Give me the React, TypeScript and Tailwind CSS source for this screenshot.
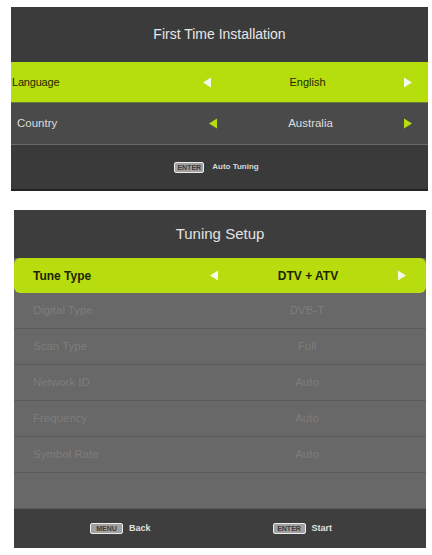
import React from 'react';

const font = { fontFamily: '"Liberation Sans", Arial, sans-serif' };

const Arrow: React.FC<{ dir: 'left' | 'right'; color: string }> = ({ dir, color }) => (
  <svg width="10" height="11" viewBox="0 0 10 11">
    {dir === 'left' ? <polygon points="9,0.5 9,10.5 1,5.5" fill={color} /> : <polygon points="1,0.5 1,10.5 9,5.5" fill={color} />}
  </svg>
);

const Key: React.FC<{ label: string; w: string }> = ({ label, w }) => (
  <span
    className={`inline-flex h-[11px] items-center justify-center rounded-[2px] border border-[#ececec] bg-[#a0a0a0] text-[7px] font-bold leading-none text-[#3a3a3a] ${w}`}
  >
    {label}
  </span>
);

const rows = [
  { label: 'Digital Type', value: 'DVB-T' },
  { label: 'Scan Type', value: 'Full' },
  { label: 'Network ID', value: 'Auto' },
  { label: 'Frequency', value: 'Auto' },
  { label: 'Symbol Rate', value: 'Auto' },
];

const App: React.FC = () => {
  return (
    <div className="flex h-[555px] w-[432px] flex-col overflow-hidden bg-white" style={font}>
      {/* First Time Installation */}
      <div className="ml-[11px] mt-[7px] flex w-[417px] flex-col bg-[#3b3b3b]">
        <div className="flex h-[55px] items-center justify-center text-[14px] text-[#e6e6e6]">
          First Time Installation
        </div>
        <div className="flex h-[41px] items-center border-b border-[#6a7a3a] bg-[#b6dd0c] text-[11px] text-[#1e2a00]">
          <span className="w-[191px] pl-[1px] tracking-[-0.2px]">Language</span>
          <Arrow dir="left" color="#f4f8e8" />
          <span className="flex-1 text-center">English</span>
          <span className="mr-[15px]">
            <Arrow dir="right" color="#f4f8e8" />
          </span>
        </div>
        <div className="flex h-[42px] items-center border-b border-[#6a6a6a] bg-[#4a4a4a] text-[11.5px] text-[#dcdcdc]">
          <span className="w-[197px] pl-[6px]">Country</span>
          <Arrow dir="left" color="#b6dd0c" />
          <span className="flex-1 text-center">Australia</span>
          <span className="mr-[15px]">
            <Arrow dir="right" color="#b6dd0c" />
          </span>
        </div>
        <div className="flex h-[46px] items-center justify-center gap-[8px] border-b-2 border-[#222] bg-[#3a3a3a] pr-[6px]">
          <Key label="ENTER" w="w-[30px]" />
          <span className="text-[8px] font-bold text-[#d8d8d8]">Auto Tuning</span>
        </div>
      </div>

      {/* Tuning Setup */}
      <div className="ml-[14px] mt-[19px] flex w-[412px] flex-col bg-[#676767]">
        <div className="flex h-[48px] items-center justify-center bg-[#3d3d3d] text-[15px] text-[#e2e2e2]">
          Tuning Setup
        </div>
        <div className="flex h-[35px] items-center rounded-[6px] bg-[#b8dd0e] text-[12px] font-bold text-[#1c2400]">
          <span className="w-[195px] pl-[19px]">Tune Type</span>
          <Arrow dir="left" color="#f4f8e8" />
          <span className="flex-1 text-center">DTV + ATV</span>
          <span className="mr-[19px]">
            <Arrow dir="right" color="#f4f8e8" />
          </span>
        </div>
        {rows.map((r) => (
          <div
            key={r.label}
            className="flex h-[36px] items-center border-b border-[#5a5a5a] bg-[#686868] text-[11.5px] text-[#7d7d7d]"
          >
            <span className="w-[260px] pl-[19px]">{r.label}</span>
            <span className="flex-1 pr-[86px] text-center">{r.value}</span>
          </div>
        ))}
        <div className="h-[36px] border-b border-[#5a5a5a] bg-[#686868]" />
        <div className="flex h-[39px] items-center bg-[#3e3e3e] text-[9px] font-bold text-[#e0e0e0]">
          <div className="ml-[76px] flex items-center gap-[6px]">
            <Key label="MENU" w="w-[33px]" />
            <span>Back</span>
          </div>
          <div className="ml-[122px] flex items-center gap-[6px]">
            <Key label="ENTER" w="w-[33px]" />
            <span>Start</span>
          </div>
        </div>
      </div>
    </div>
  );
};

export default App;
